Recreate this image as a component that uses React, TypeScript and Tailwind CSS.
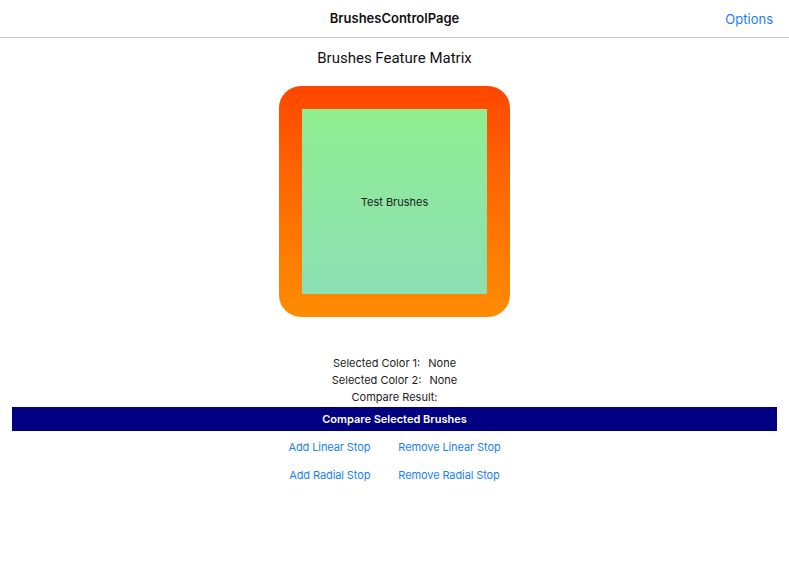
import React from 'react';

const font = { fontFamily: 'Inter, "Noto Sans", sans-serif' };

function LinkButton({ label }: { label: string }) {
  return <button className="text-[11px] tracking-[-0.1px] text-[#1a7ef7]">{label}</button>;
}

export default function App() {
  return (
    <div
      className="flex h-[563px] w-[789px] flex-col overflow-hidden rounded-b-[12px] bg-white"
      style={font}
    >
      <div className="relative flex h-[38px] shrink-0 items-center justify-center border-b border-[#c6c6c8]">
        <span className="text-[13px] font-semibold text-[#111]">BrushesControlPage</span>
        <span className="absolute right-[16px] top-[10px] text-[13px] text-[#1a7ef7]">Options</span>
      </div>

      <div
        className="mt-[10px] text-center text-[15px] leading-[20px] text-[#111]"
        style={{ fontFamily: 'Roboto, sans-serif' }}
      >
        Brushes Feature Matrix
      </div>

      <div className="mt-[18px] flex justify-center">
        <div className="h-[231px] w-[231px] rounded-[22px] bg-gradient-to-b from-[#ff4500] to-[#ff8c00] p-[23px]">
          <div className="flex h-full w-full items-center justify-center bg-gradient-to-b from-[#90ee90] to-[#8cdfb4]">
            <span className="mt-[2px] text-[11px] text-[#222]">Test Brushes</span>
          </div>
        </div>
      </div>

      <div className="mt-[38px] flex flex-col items-center text-[11px] leading-[17px] text-[#222]">
        <div>
          Selected Color 1:<span className="ml-[8px]">None</span>
        </div>
        <div>
          Selected Color 2:<span className="ml-[8px]">None</span>
        </div>
        <div>Compare Result:</div>
      </div>

      <div className="mx-[12px] mt-[1px] flex h-[24px] items-center justify-center bg-[#000080]">
        <span className="text-[11px] font-semibold text-white">Compare Selected Brushes</span>
      </div>

      <div className="mt-[2px] flex flex-col items-center">
        <div className="flex h-[28px] items-center gap-[28px]">
          <LinkButton label="Add Linear Stop" />
          <LinkButton label="Remove Linear Stop" />
        </div>
        <div className="flex h-[28px] items-center gap-[28px]">
          <LinkButton label="Add Radial Stop" />
          <LinkButton label="Remove Radial Stop" />
        </div>
      </div>
    </div>
  );
}
